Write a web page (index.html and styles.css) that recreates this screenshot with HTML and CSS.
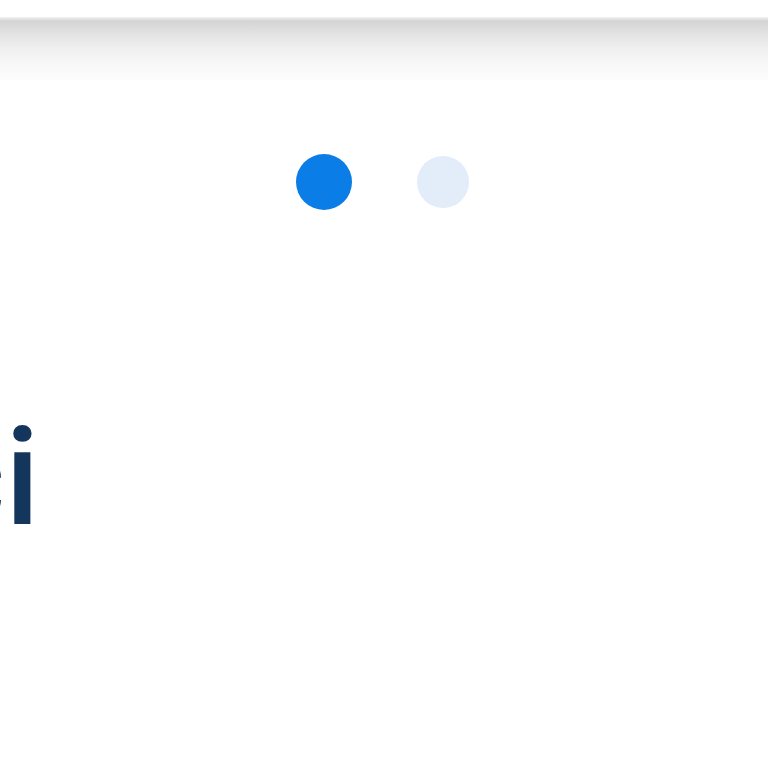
FILE: index.html
```html
<!DOCTYPE html>
<html>
<head>
<meta charset="utf-8">
<link rel="stylesheet" href="styles.css">
</head>
<body>
<div class="topbar"></div>
<div class="shadow"></div>
<div class="dots">
  <span class="dot active"></span>
  <span class="dot"></span>
</div>
<h1 class="title">ci</h1>
</body>
</html>
```
FILE: styles.css
```css
html, body {
  margin: 0;
  padding: 0;
  background: #ffffff;
  width: 768px;
  height: 768px;
  overflow: hidden;
}
.topbar {
  height: 17px;
  background: #ffffff;
}
.shadow {
  height: 63px;
  background: linear-gradient(to bottom, #f2f2f2 0px, #d4d4d4 4px, #e2e2e2 16px, #f0f0f0 32px, #f8f8f8 48px, #fcfcfc 63px);
}
.dots {
  display: flex;
  justify-content: center;
  align-items: center;
  gap: 65px;
  margin-top: 74px;
  height: 56px;
  padding-right: 3px;
}
.dot {
  width: 52px;
  height: 52px;
  border-radius: 50%;
  background: #e3edfa;
}
.dot.active {
  width: 56px;
  height: 56px;
  background: #0a7de6;
}
.title {
  margin: 0;
  margin-left: -66px;
  font-family: Roboto, sans-serif;
  font-weight: 500;
  font-size: 136px;
  line-height: 1;
  color: #14365c;
  margin-top: 200px;
}
```
